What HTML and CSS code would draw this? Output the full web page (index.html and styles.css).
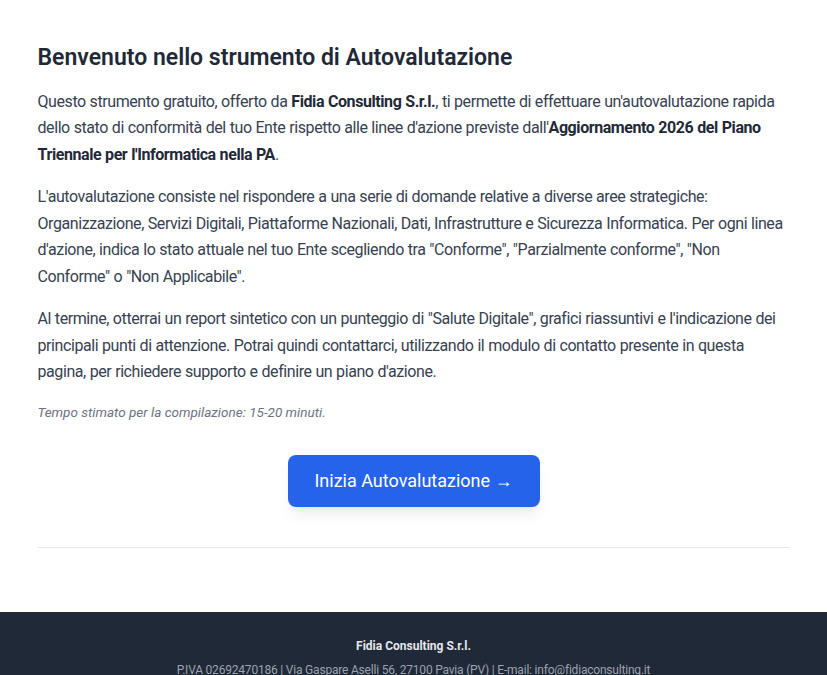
FILE: index.html
```html
<!DOCTYPE html>
<html lang="it">
<head>
<meta charset="utf-8">
<title>Autovalutazione</title>
<link rel="stylesheet" href="styles.css">
</head>
<body>
<main class="page">
  <section class="intro">
    <h1 class="title">Benvenuto nello strumento di Autovalutazione</h1>
    <p class="text">Questo strumento gratuito, offerto da <strong>Fidia Consulting S.r.l.</strong>, ti permette di effettuare un'autovalutazione rapida dello stato di conformità del tuo Ente rispetto alle linee d'azione previste dall'<strong>Aggiornamento 2026 del Piano Triennale per l'Informatica nella PA</strong>.</p>
    <p class="text">L'autovalutazione consiste nel rispondere a una serie di domande relative a diverse aree strategiche: Organizzazione, Servizi Digitali, Piattaforme Nazionali, Dati, Infrastrutture e Sicurezza Informatica. Per ogni linea d'azione, indica lo stato attuale nel tuo Ente scegliendo tra "Conforme", "Parzialmente conforme", "Non Conforme" o "Non Applicabile".</p>
    <p class="text">Al termine, otterrai un report sintetico con un punteggio di "Salute Digitale", grafici riassuntivi e l'indicazione dei principali punti di attenzione. Potrai quindi contattarci, utilizzando il modulo di contatto presente in questa pagina, per richiedere supporto e definire un piano d'azione.</p>
    <p class="note">Tempo stimato per la compilazione: 15-20 minuti.</p>
    <div class="actions">
      <button class="btn" type="button">Inizia Autovalutazione →</button>
    </div>
  </section>
  <hr class="divider">
</main>
<footer class="footer">
  <p class="footer-name">Fidia Consulting S.r.l.</p>
  <p class="footer-info">P.IVA 02692470186 | Via Gaspare Aselli 56, 27100 Pavia (PV) | E-mail: info@fidiaconsulting.it</p>
</footer>
</body>
</html>
```

FILE: styles.css
```css
* { box-sizing: border-box; }
html, body { margin: 0; padding: 0; }
body {
  font-family: Roboto, "Noto Sans", sans-serif;
  color: #374151;
  background: #ffffff;
}
.page {
  max-width: 800px;
  margin: 0 auto;
  padding: 43px 24px 0;
}
.title {
  margin: 0 0 16px;
  font-size: 23px;
  font-weight: 600;
  color: #1f2937;
  line-height: 1.3;
}
.text {
  margin: 0 0 16px;
  font-size: 16px;
  line-height: 26.5px;
  letter-spacing: -0.42px;
  word-spacing: 0.3px;
}
.text strong { font-weight: 700; color: #1f2937; }
.note {
  margin: 18px 0 0;
  font-size: 13.5px;
  font-style: italic;
  color: #6b7280;
}
.actions {
  display: flex;
  justify-content: center;
  padding: 35px 0 40px;
}
.btn {
  width: 252px;
  height: 52px;
  border: none;
  border-radius: 8px;
  background: #2563eb;
  color: #ffffff;
  font-family: inherit;
  font-size: 18px;
  box-shadow: 0 10px 15px -3px rgba(0,0,0,0.07), 0 4px 6px -4px rgba(0,0,0,0.07);
}
.divider {
  margin: 0;
  border: none;
  border-top: 1px solid #e5e7eb;
}
.footer {
  margin-top: 64px;
  background: #1f2937;
  color: #9ca3af;
  text-align: center;
  padding: 27px 16px 30px;
  font-size: 12px;
  letter-spacing: -0.2px;
}
.footer-name {
  margin: 0 0 10px;
  color: #e5e7eb;
  font-weight: 700;
  font-size: 12px;
  letter-spacing: 0;
}
.footer-info { margin: 0; }
```
